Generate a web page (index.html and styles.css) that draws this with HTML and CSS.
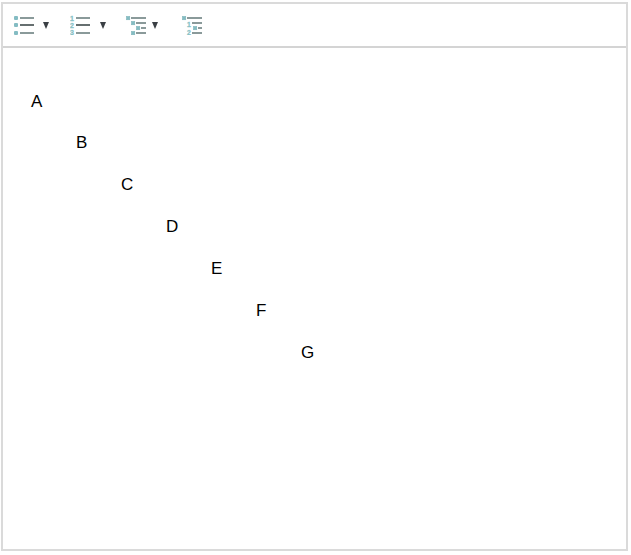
FILE: index.html
```html
<!DOCTYPE html>
<html lang="en">
<head>
  <meta charset="UTF-8">
  <meta name="viewport" content="width=device-width, initial-scale=1.0">
  <title>List editor</title>
  <link rel="stylesheet" href="styles.css">
</head>
<body>
  <div class="editor">
    <div class="toolbar">
      <button class="tool">
        <svg width="20" height="20" viewBox="0 0 20 20">
          <rect class="mark" x="0" y="1" width="4" height="4" rx="1"/>
          <rect class="mark" x="0" y="8" width="4" height="4" rx="1"/>
          <rect class="mark" x="0" y="16" width="4" height="4" rx="1"/>
          <rect class="rule" x="6" y="2" width="14" height="2"/>
          <rect class="rule dark" x="6" y="9" width="14" height="2"/>
          <rect class="rule" x="6" y="17" width="14" height="2"/>
        </svg>
        <span class="caret"></span>
      </button>
      <button class="tool">
        <svg width="20" height="20" viewBox="0 0 20 20">
          <text class="num" x="0" y="5.5">1</text>
          <text class="num" x="0" y="12.8">2</text>
          <text class="num" x="0" y="20">3</text>
          <rect class="rule" x="6" y="2" width="14" height="2"/>
          <rect class="rule dark" x="6" y="9" width="14" height="2"/>
          <rect class="rule" x="6" y="17" width="14" height="2"/>
        </svg>
        <span class="caret far"></span>
      </button>
      <button class="tool">
        <svg width="20" height="20" viewBox="0 0 20 20">
          <rect class="mark box" x="0.4" y="1.4" width="3.4" height="3.4"/>
          <rect class="mark box" x="5.4" y="6.4" width="3.4" height="3.4"/>
          <rect class="mark box" x="10.4" y="11.4" width="3.4" height="3.4"/>
          <rect class="mark box" x="5.4" y="16.4" width="3.4" height="3.4"/>
          <rect class="rule" x="5" y="2" width="15" height="2"/>
          <rect class="rule" x="10" y="7" width="10" height="2"/>
          <rect class="rule" x="15" y="12" width="5" height="2"/>
          <rect class="rule" x="10" y="17" width="10" height="2"/>
        </svg>
        <span class="caret near"></span>
      </button>
      <button class="tool">
        <svg width="20" height="20" viewBox="0 0 20 20">
          <rect class="mark box" x="0.4" y="1.4" width="3.4" height="3.4"/>
          <text class="num big" x="5" y="12">1</text>
          <rect class="mark box" x="11.4" y="11.4" width="3.4" height="3.4"/>
          <text class="num big" x="5" y="20">2</text>
          <rect class="rule" x="5" y="2" width="15" height="2"/>
          <rect class="rule" x="10" y="7" width="10" height="2"/>
          <rect class="rule" x="16" y="12" width="4" height="2"/>
          <rect class="rule" x="10" y="17" width="10" height="2"/>
        </svg>
      </button>
    </div>
    <div class="content">
      <p class="item">A</p>
      <p class="item level-1">B</p>
      <p class="item level-2">C</p>
      <p class="item level-3">D</p>
      <p class="item level-4">E</p>
      <p class="item level-5">F</p>
      <p class="item level-6">G</p>
    </div>
  </div>
</body>
</html>
```

FILE: styles.css
```css
html, body {
  height: 100%;
}
body {
  margin: 0;
  padding: 2px 3px 4px 1px;
  box-sizing: border-box;
  font-family: "Liberation Sans", Arial, sans-serif;
  background: #fff;
}
.editor {
  height: 100%;
  box-sizing: border-box;
  border: 2px solid #dadada;
  display: flex;
  flex-direction: column;
}
.toolbar {
  height: 42px;
  border-bottom: 2px solid #d4d4d4;
  display: flex;
  align-items: center;
  padding-left: 11px;
  gap: 20px;
  flex: none;
}
.tool {
  display: flex;
  align-items: center;
  width: 36px;
  height: 20px;
  margin-top: 0;
  padding: 0;
  border: 0;
  background: none;
}
.tool svg {
  flex: none;
  display: block;
}
.caret {
  margin-left: 9px;
  margin-top: 1px;
  width: 0;
  height: 0;
  border-left: 3px solid transparent;
  border-right: 3px solid transparent;
  border-top: 7px solid #3a3f44;
}
.caret.far {
  margin-left: 10px;
}
.caret.near {
  margin-left: 6px;
}
.mark {
  fill: #84bcc3;
}
.box {
  stroke: #7db3b8;
  stroke-width: 0.5;
}
.rule {
  fill: #8a9a9a;
}
.rule.dark {
  fill: #666f70;
}
.num {
  font-family: "Liberation Sans", Arial, sans-serif;
  font-size: 7px;
  font-weight: bold;
  fill: #7fbcc0;
  stroke: #8fc6cb;
  stroke-width: 0.3;
}
.num.big {
  font-size: 6.9px;
}
.content {
  flex: 1;
  padding: 45px 0 0 28px;
  font-size: 17px;
}
.item {
  margin: 0 0 24px;
  line-height: 18px;
}
.item:first-child {
  margin-bottom: 23px;
}
.level-1 { padding-left: 45px; }
.level-2 { padding-left: 90px; }
.level-3 { padding-left: 135px; }
.level-4 { padding-left: 180px; }
.level-5 { padding-left: 225px; }
.level-6 { padding-left: 270px; }
```
